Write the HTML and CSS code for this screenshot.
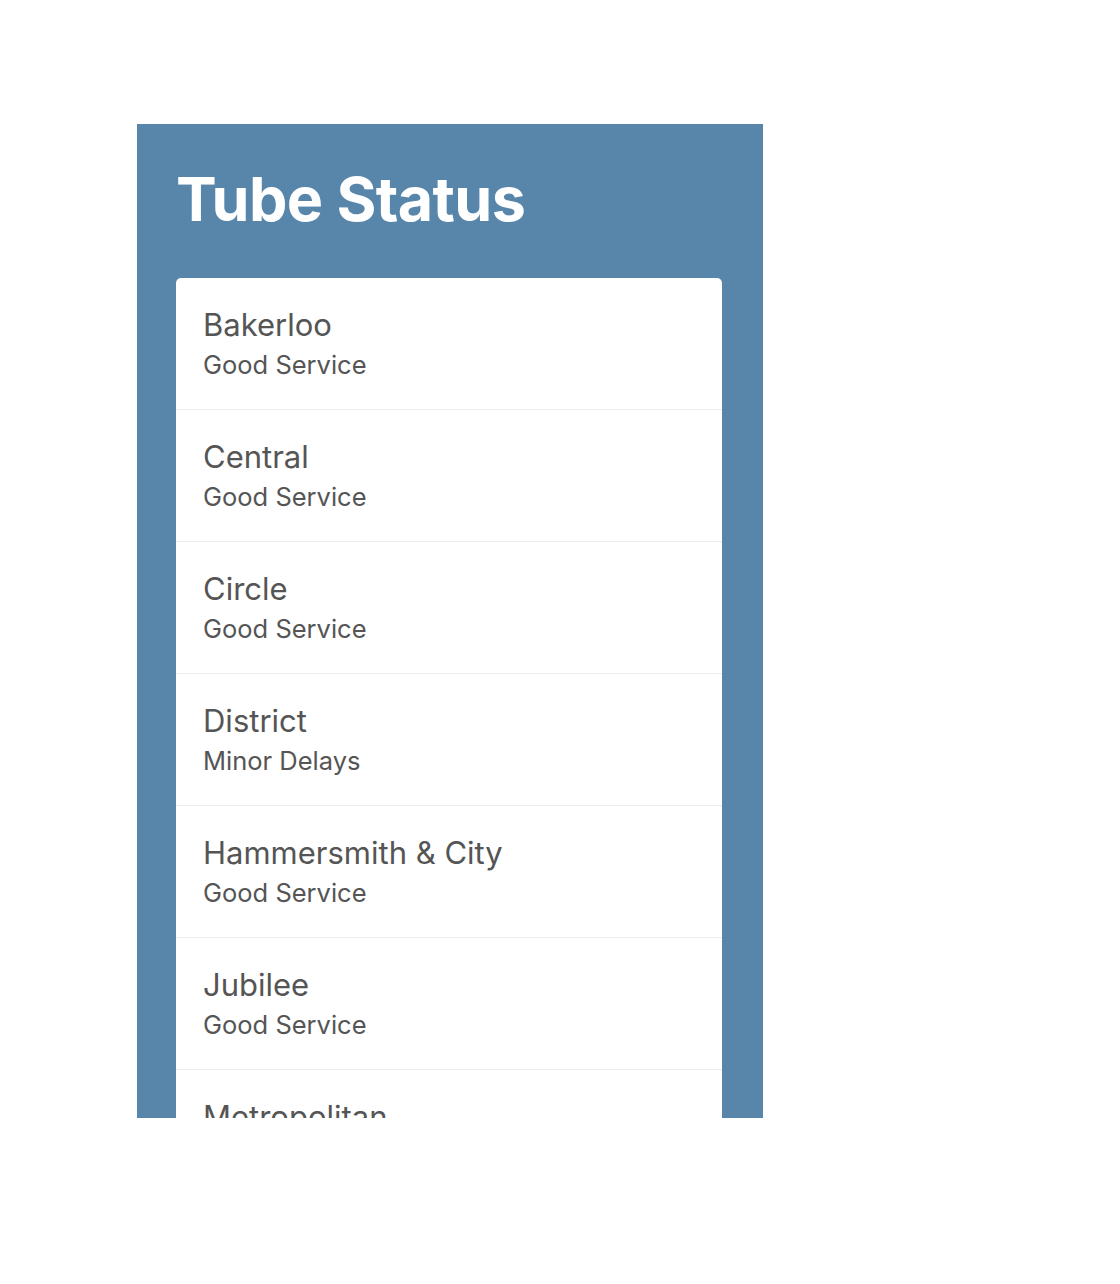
FILE: index.html
```html
<!DOCTYPE html>
<html>
<head>
<meta charset="utf-8">
<link rel="stylesheet" href="styles.css">
</head>
<body>
<div class="panel">
  <h1 class="title">Tube Status</h1>
  <ul class="card">
    <li class="row"><div class="name">Bakerloo</div><div class="status">Good Service</div></li>
    <li class="row"><div class="name">Central</div><div class="status">Good Service</div></li>
    <li class="row"><div class="name">Circle</div><div class="status">Good Service</div></li>
    <li class="row"><div class="name">District</div><div class="status">Minor Delays</div></li>
    <li class="row"><div class="name">Hammersmith &amp; City</div><div class="status">Good Service</div></li>
    <li class="row"><div class="name">Jubilee</div><div class="status">Good Service</div></li>
    <li class="row"><div class="name">Metropolitan</div><div class="status">Good Service</div></li>
    <li class="row"><div class="name">Northern</div><div class="status">Good Service</div></li>
  </ul>
</div>
</body>
</html>
```
FILE: styles.css
```css
html, body {
  margin: 0;
  padding: 0;
  background: #ffffff;
}
body {
  font-family: Inter, "Liberation Sans", Arial, sans-serif;
  padding: 124px 0 0 137px;
}
.panel {
  width: 626px;
  height: 994px;
  box-sizing: border-box;
  background: #5886ab;
  padding: 40px 41px 0 39px;
  overflow: hidden;
}
.title {
  margin: 0;
  color: #ffffff;
  font-size: 61px;
  font-weight: 700;
  line-height: 70px;
  letter-spacing: -0.6px;
  height: 114px;
}
.card {
  list-style: none;
  margin: 0;
  padding: 0;
  background: #ffffff;
  border-radius: 5px 5px 0 0;
}
.row {
  height: 132px;
  box-sizing: border-box;
  padding: 27px 27px 0;
  border-bottom: 1px solid #ececec;
  color: #555555;
}
.name {
  font-size: 31px;
  line-height: 40px;
}
.status {
  font-size: 25.5px;
  line-height: 34px;
  margin-top: 3px;
}
```
